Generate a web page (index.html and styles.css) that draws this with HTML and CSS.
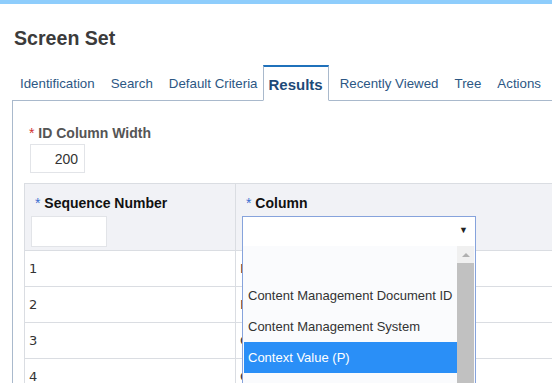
FILE: index.html
```html
<!DOCTYPE html>
<html lang="en">
  <head>
    <meta charset="UTF-8" />
    <title>Screen Set</title>
    <link rel="stylesheet" href="styles.css">
  </head>
  <body>
    <div class="topbar"></div>
    <h1 class="title">Screen Set</h1>

    <div class="tabs">
      <span class="tab">Identification</span>
      <span class="tab">Search</span>
      <span class="tab">Default Criteria</span>
      <span class="tab active">Results</span>
      <span class="tab">Recently Viewed</span>
      <span class="tab">Tree</span>
      <span class="tab">Actions</span>
    </div>

    <div class="panel">
      <div class="field">
        <label class="label"><span class="req">*</span> ID Column Width</label>
        <input class="num" type="text" value="200" />
      </div>

      <table class="grid">
        <thead>
          <tr>
            <th class="col-seq">
              <div class="th-label"><span class="req blue">*</span> Sequence Number</div>
              <input class="seq-input" type="text" />
            </th>
            <th class="col-col">
              <div class="th-label"><span class="req blue">*</span> Column</div>
              <div class="select">
                <span class="arrow">&#9660;</span>
                <div class="dropdown">
                  <div class="list">
                    <div class="opt blank"></div>
                    <div class="opt">Content Management Document ID</div>
                    <div class="opt">Content Management System</div>
                    <div class="opt selected">Context Value (P)</div>
                    <div class="opt">Created By</div>
                  </div>
                  <div class="scroll">
                    <div class="up"></div>
                    <div class="thumb"></div>
                  </div>
                </div>
              </div>
            </th>
            <th class="col-rest"></th>
          </tr>
        </thead>
        <tbody>
          <tr><td>1</td><td>Description</td><td class="rest"></td></tr>
          <tr><td>2</td><td>Document Type</td><td class="rest"></td></tr>
          <tr><td>3</td><td>Created On</td><td class="rest"></td></tr>
          <tr><td>4</td><td>Content Owner</td><td class="rest"></td></tr>
        </tbody>
      </table>
    </div>
  </body>
</html>
```

FILE: styles.css
```css
body {
  margin: 0;
  font-family: "Liberation Sans", Arial, sans-serif;
  background: #fff;
  color: #333;
  overflow: hidden;
}
.topbar {
  height: 4px;
  background: #8ecdfc;
}
.title {
  margin: 22px 0 0 14px;
  font-size: 19.6px;
  line-height: 24px;
  color: #3b3b3b;
}
.tabs {
  display: flex;
  margin: 15px 0 0 12px;
  height: 35px;
  border-bottom: 1px solid #a9b9cc;
}
.tab {
  padding: 0 8px;
  line-height: 37px;
  font-size: 13.3px;
  color: #2c5784;
  white-space: nowrap;
}
.tab.active {
  margin: 0 3px -1px -3px;
  padding: 0 5px;
  line-height: 35px;
  font-size: 15px;
  font-weight: bold;
  color: #1d4a78;
  background: #fff;
  border: 1px solid #a9b9cc;
  border-top: 2px solid #1f71bb;
  border-bottom: 1px solid #fff;
}
.panel {
  margin-left: 12px;
  padding: 24px 0 0 11px;
  border-left: 1px solid #a9b9cc;
  height: 400px;
}
.field {
  padding-left: 5px;
}
.label {
  display: block;
  font-size: 14px;
  font-weight: bold;
  color: #555;
}
.req {
  color: #d03030;
  font-weight: normal;
}
.req.blue {
  color: #3a6fd0;
}
.num {
  display: block;
  margin: 3px 0 0 1px;
  box-sizing: border-box;
  width: 55px;
  height: 29px;
  padding: 0 6px;
  border: 1px solid #e2e4e8;
  text-align: right;
  font-family: "Liberation Sans", Arial, sans-serif;
  font-size: 14px;
  color: #333;
}
.grid {
  margin-top: 10px;
  border-collapse: collapse;
  width: 560px;
}
.grid th {
  background: #f1f2f6;
  border-top: 1px solid #dadde2;
  border-left: 1px solid #dadde2;
  text-align: left;
  vertical-align: top;
  padding: 10px 6px 3px 6px;
  height: 51px;
}
.grid th.col-rest {
  border-left: none;
}
.th-label {
  font-size: 14px;
  color: #111;
  padding-left: 4px;
  line-height: 18px;
}
.col-seq {
  width: 198px;
}
.col-col {
  width: 234px;
  position: relative;
}
.seq-input {
  display: block;
  margin-top: 4px;
  box-sizing: border-box;
  width: 76px;
  height: 31px;
  border: 1px solid #e2e4e8;
  background: #fff;
}
.select {
  position: relative;
  margin-top: 4px;
  box-sizing: border-box;
  width: 234px;
  height: 31px;
  background: #fff;
  border: 1px solid #86a3dc;
}
.arrow {
  position: absolute;
  right: 7px;
  top: 8px;
  font-size: 9px;
  color: #222;
}
.dropdown {
  position: absolute;
  top: 29px;
  left: -1px;
  width: 234px;
  height: 170px;
  box-sizing: border-box;
  display: flex;
  background: #fafbfd;
  border: 1px solid #86a3dc;
  border-top: none;
  z-index: 2;
}
.list {
  flex: 1;
  min-width: 0;
  overflow: hidden;
  padding-left: 1px;
}
.opt {
  height: 31px;
  line-height: 31px;
  padding-left: 4px;
  font-size: 13px;
  font-weight: normal;
  color: #333;
  white-space: nowrap;
}
.opt.blank {
  height: 34px;
}
.opt.selected {
  background: #2a8ff7;
  color: #fff;
}
.scroll {
  flex: none;
  width: 17px;
  background: #f0f0f0;
  margin-right: 1px;
}
.up {
  height: 17px;
  position: relative;
}
.up::after {
  content: "";
  position: absolute;
  left: 5px;
  top: 7px;
  border-left: 4px solid transparent;
  border-right: 4px solid transparent;
  border-bottom: 4px solid #b0b0b0;
}
.thumb {
  height: 200px;
  background: #c1c1c1;
}
.grid td {
  height: 35px;
  padding: 0 4px;
  border-top: 1px solid #dadde2;
  border-left: 1px solid #dadde2;
  font-family: "DejaVu Sans", sans-serif;
  font-size: 13px;
  color: #333;
  white-space: nowrap;
}
.grid td.rest {
  border-left: none;
}
```
